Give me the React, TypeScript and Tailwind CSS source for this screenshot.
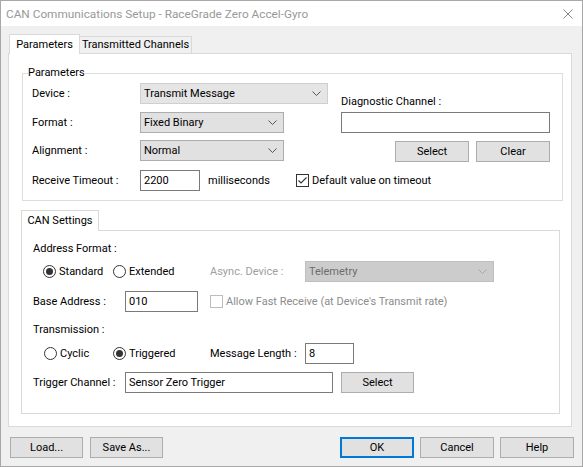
import React from "react";

const FONT = "font-['Roboto','Liberation_Sans',sans-serif]";

function Chevron({ color = "#555555" }: { color?: string }) {
  return (
    <svg width="9" height="5" viewBox="0 0 9 5" className="shrink-0">
      <path d="M0.5 0.5L4.5 4.5L8.5 0.5" fill="none" stroke={color} strokeWidth="1" />
    </svg>
  );
}

function Radio({ checked }: { checked?: boolean }) {
  return (
    <span className="w-[13px] h-[13px] rounded-full border border-[#333333] bg-white flex items-center justify-center shrink-0">
      {checked && <span className="w-[7px] h-[7px] rounded-full bg-[#333333]" />}
    </span>
  );
}

function Check({ checked, disabled, className = "" }: { checked?: boolean; disabled?: boolean; className?: string }) {
  return (
    <span
      className={
        (disabled
          ? "w-[13px] h-[13px] border border-[#bcbcbc] bg-white shrink-0 block "
          : "w-[13px] h-[13px] border border-[#333333] bg-white shrink-0 flex items-center justify-center ") + className
      }
    >
      {checked && (
        <svg width="11" height="11" viewBox="0 0 11 11">
          <path d="M1.5 5.5L4 8L9.5 2.5" fill="none" stroke="#333333" strokeWidth="1.1" />
        </svg>
      )}
    </span>
  );
}

function Btn({ children, className }: { children: React.ReactNode; className: string }) {
  return (
    <div
      className={
        "h-[21px] flex items-center justify-center bg-[#e1e1e1] border border-[#adadad] shrink-0 " + className
      }
    >
      {children}
    </div>
  );
}

function TextBox({ children, className }: { children?: React.ReactNode; className: string }) {
  return (
    <div className={"h-[21px] flex items-center bg-white border border-[#7a7a7a] pl-[3px] shrink-0 " + className}>
      {children}
    </div>
  );
}

function Combo({ text, className }: { text: string; className: string }) {
  return (
    <div
      className={
        "h-[21px] flex items-center justify-between bg-[#e1e1e1] border pl-[3px] pr-[6px] shrink-0 " + className
      }
    >
      <span>{text}</span>
      <Chevron />
    </div>
  );
}

export default function App() {
  return (
    <div
      className={
        "w-[583px] h-[467px] bg-[#f0f0f0] border border-[#a8a8a8] flex flex-col text-[11px] leading-[16px] text-black overflow-hidden " +
        FONT
      }
    >
      {/* Title bar */}
      <div className="h-[25px] bg-white flex items-center justify-between pl-[5px] pr-[9px] shrink-0">
        <span className="text-[#999999] text-[11.8px]">CAN Communications Setup - RaceGrade Zero Accel-Gyro</span>
        <svg width="10" height="10" viewBox="0 0 10 10">
          <path d="M0.5 0.5L9.5 9.5M9.5 0.5L0.5 9.5" stroke="#8a8a8a" strokeWidth="1" />
        </svg>
      </div>

      {/* Body */}
      <div className="flex flex-col pt-[8px] pl-[7px]">
        {/* Tabs */}
        <div className="flex items-end h-[19px] pl-px relative z-10">
          <div className="h-[20px] -mb-px w-[71px] bg-white border border-b-0 border-[#d9d9d9] flex items-center justify-center">
            Parameters
          </div>
          <div className="h-[17px] w-[112px] bg-[#f0f0f0] border border-l-0 border-b-0 border-[#d9d9d9] flex items-center justify-center">
            Transmitted Channels
          </div>
        </div>

        {/* Tab panel */}
        <div className="w-[564px] h-[374px] bg-white border border-[#d9d9d9] flex flex-col pl-[12px]">
          {/* Parameters group */}
          <div className="relative mt-[19px] ml-px w-[541px] h-[128px] border border-[#dcdcdc] flex flex-col pl-[9px] pt-[9px]">
            <span className="absolute left-[5px] top-[-9px] bg-white leading-[16px]">Parameters</span>
            <div className="flex">
              <div className="flex flex-col w-[296px]">
                <div className="flex items-center h-[21px]">
                  <span className="w-[108px]">Device :</span>
                  <Combo text="Transmit Message" className="w-[188px] border-[#cfcfcf] bg-[#e5e5e5]" />
                </div>
                <div className="flex items-center h-[21px] mt-[8px]">
                  <span className="w-[108px]">Format :</span>
                  <Combo text="Fixed Binary" className="w-[144px] border-[#adadad]" />
                </div>
                <div className="flex items-center h-[21px] mt-[7px]">
                  <span className="w-[108px]">Alignment :</span>
                  <Combo text="Normal" className="w-[144px] border-[#adadad]" />
                </div>
              </div>
              <div className="flex flex-col ml-[13px] w-[209px]">
                <span className="mt-[11px] h-[16px]">Diagnostic Channel :</span>
                <TextBox className="mt-[2px] w-[209px]" />
                <div className="mt-[8px] flex justify-end gap-[7px]">
                  <Btn className="w-[74px]">Select</Btn>
                  <Btn className="w-[74px]">Clear</Btn>
                </div>
              </div>
            </div>
            <div className="flex items-center h-[21px] mt-[8px]">
              <span className="w-[108px]">Receive Timeout :</span>
              <TextBox className="w-[60px]">2200</TextBox>
              <span className="ml-[8px] w-[88px]">milliseconds</span>
              <Check checked />
              <span className="ml-[3px]">Default value on timeout</span>
            </div>
          </div>

          {/* CAN Settings tab */}
          <div className="mt-[9px] flex items-end h-[20px] relative z-10">
            <div className="h-[21px] -mb-px w-[78px] bg-white border border-b-0 border-[#d9d9d9] flex items-center justify-center">
              CAN Settings
            </div>
          </div>
          <div className="w-[539px] h-[184px] border border-[#d9d9d9] bg-white flex flex-col pl-[11px]">
            <span className="mt-[10px] h-[16px]">Address Format :</span>
            <div className="mt-[4px] h-[21px] flex items-center">
              <div className="ml-[10px] w-[70px] flex items-center gap-[3px]">
                <Radio checked />
                <span>Standard</span>
              </div>
              <div className="w-[97px] flex items-center gap-[3px]">
                <Radio />
                <span>Extended</span>
              </div>
              <span className="w-[95px] text-[#a0a0a0]">Async. Device :</span>
              <div className="w-[189px] h-[21px] bg-[#cccccc] border border-[#bfbfbf] flex items-center justify-between pl-[3px] pr-[6px] text-[#6d6d6d]">
                <span>Telemetry</span>
                <Chevron color="#a8a8a8" />
              </div>
            </div>
            <div className="mt-[9px] h-[21px] flex items-center">
              <span className="w-[92px]">Base Address :</span>
              <TextBox className="w-[73px]">010</TextBox>
              <Check disabled className="ml-[12px]" />
              <span className="ml-[3px] text-[#8c8c8c]">Allow Fast Receive (at Device's Transmit rate)</span>
            </div>
            <span className="mt-[10px] h-[16px]">Transmission :</span>
            <div className="mt-[5px] h-[21px] flex items-center">
              <div className="ml-[11px] w-[69px] flex items-center gap-[3px]">
                <Radio />
                <span>Cyclic</span>
              </div>
              <div className="w-[97px] flex items-center gap-[3px]">
                <Radio checked />
                <span>Triggered</span>
              </div>
              <span className="w-[95px]">Message Length :</span>
              <TextBox className="w-[49px]">8</TextBox>
            </div>
            <div className="mt-[8px] h-[21px] flex items-center">
              <span className="w-[92px]">Trigger Channel :</span>
              <TextBox className="w-[208px]">Sensor Zero Trigger</TextBox>
              <Btn className="ml-[8px] w-[73px]">Select</Btn>
            </div>
          </div>
        </div>

        {/* Bottom buttons */}
        <div className="mt-[10px] flex pl-[2px] pr-[8px]">
          <Btn className="w-[73px]">Load...</Btn>
          <Btn className="ml-[7px] w-[73px]">Save As...</Btn>
          <div className="ml-auto flex gap-[6px]">
            <div className="h-[21px] w-[74px] flex items-center justify-center bg-[#e1e1e1] border-2 border-[#0078d7]">
              OK
            </div>
            <Btn className="w-[74px]">Cancel</Btn>
            <Btn className="w-[74px]">Help</Btn>
          </div>
        </div>
      </div>
    </div>
  );
}
